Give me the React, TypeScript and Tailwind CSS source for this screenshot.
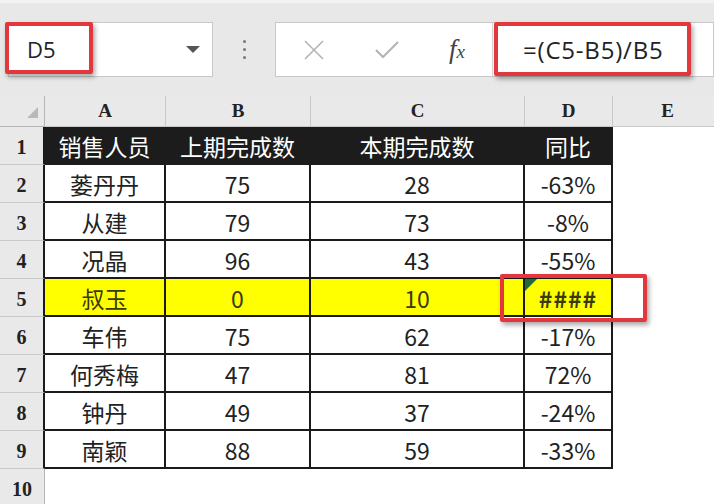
import React from "react";

const rows = [
  { name: "蒌丹丹", prev: "75", cur: "28", ratio: "-63%" },
  { name: "从建", prev: "79", cur: "73", ratio: "-8%" },
  { name: "况晶", prev: "96", cur: "43", ratio: "-55%" },
  { name: "叔玉", prev: "0", cur: "10", ratio: "####", hl: true },
  { name: "车伟", prev: "75", cur: "62", ratio: "-17%" },
  { name: "何秀梅", prev: "47", cur: "81", ratio: "72%" },
  { name: "钟丹", prev: "49", cur: "37", ratio: "-24%" },
  { name: "南颖", prev: "88", cur: "59", ratio: "-33%" },
];

const cjk = { fontFamily: '"Noto Sans CJK SC", "Noto Sans", sans-serif' };
const hdr = { fontFamily: '"Liberation Serif", "DejaVu Serif", serif' };
const ui = { fontFamily: '"Open Sans", "Noto Sans", sans-serif' };

function RowHead({ n, dark }: { n: number; dark: boolean }) {
  return (
    <div
      style={hdr}
      className={
        dark
          ? "flex items-end justify-center pb-[2px] bg-[#e9e9e9] border-b border-[#c9c9c9] border-r-2 border-r-[#1a1a1a] text-[20px] font-bold text-[#222]"
          : "flex items-end justify-center pb-[2px] bg-[#e9e9e9] border-b border-[#c9c9c9] border-r border-r-[#b5b5b5] text-[20px] font-bold text-[#222]"
      }
    >
      {n}
    </div>
  );
}

function Cell({ children, hl, last }: { children: React.ReactNode; hl?: boolean; last?: boolean }) {
  return (
    <div
      style={cjk}
      className={
        hl
          ? "relative flex items-center justify-center pt-[2px] bg-[#ffff00] border-b-2 border-r-2 border-[#1a1a1a] text-[23px] text-[#3a3a10]"
          : "relative flex items-center justify-center pt-[2px] bg-white border-b-2 border-r-2 border-[#1a1a1a] text-[23px] text-[#222]"
      }
    >
      {children}
      {last && (
        <span className="absolute left-0 top-0 w-0 h-0 border-t-[12px] border-t-[#1f6b3a] border-r-[12px] border-r-transparent" />
      )}
    </div>
  );
}

export default function App() {
  return (
    <div className="relative w-[714px] h-[504px] overflow-hidden bg-white">
      {/* formula bar */}
      <div className="h-[96px] bg-[#e8e8e8] border-t-[3px] border-[#f2f2f2] flex items-start pt-[19px] pl-[8px] gap-0">
        <div className="w-[205px] h-[55px] bg-white border border-[#c8c8c8] flex items-center justify-between pl-[18px] pr-[12px]">
          <span style={ui} className="text-[22px] text-[#222]">D5</span>
          <span className="w-0 h-0 border-l-[7px] border-r-[7px] border-t-[7px] border-l-transparent border-r-transparent border-t-[#555]" />
        </div>
        <div className="w-[62px] h-[55px] flex flex-col items-center justify-center gap-[5px]">
          <span className="w-[3px] h-[3px] rounded-full bg-[#777]" />
          <span className="w-[3px] h-[3px] rounded-full bg-[#777]" />
          <span className="w-[3px] h-[3px] rounded-full bg-[#777]" />
        </div>
        <div className="flex-1 h-[55px] bg-white border border-[#c8c8c8] flex items-center">
          <div className="w-[76px] flex justify-center">
            <svg width="22" height="22" viewBox="0 0 22 22" fill="none" stroke="#b3b3b3" strokeWidth="1.6">
              <path d="M2 2L20 20M20 2L2 20" />
            </svg>
          </div>
          <div className="w-[70px] flex justify-center">
            <svg width="26" height="20" viewBox="0 0 26 20" fill="none" stroke="#b3b3b3" strokeWidth="2">
              <path d="M2 10L9 17L24 2" />
            </svg>
          </div>
          <div className="w-[70px] flex justify-center">
            <span style={hdr} className="italic text-[27px] text-[#444] leading-none">
              f<span className="text-[19px]">x</span>
            </span>
          </div>
          <div className="h-full flex items-center pl-[30px] border-l border-[#dcdcdc]">
            <span style={ui} className="text-[24px] tracking-[0.8px] text-[#222]">=(C5-B5)/B5</span>
          </div>
        </div>
      </div>

      {/* sheet */}
      <div className="grid grid-cols-[45px_121px_145px_214px_88px_110px] grid-rows-[31px_repeat(10,38px)]">
        <div className="relative bg-[#e9e9e9] border-r border-b border-[#b5b5b5]">
          <span className="absolute right-[6px] bottom-[8px] w-0 h-0 border-l-[11px] border-l-transparent border-b-[11px] border-b-[#b9b9b9]" />
        </div>
        {["A", "B", "C", "D", "E"].map((c) => (
          <div
            key={c}
            style={hdr}
            className="flex items-center justify-center bg-[#e9e9e9] border-r border-b border-[#c9c9c9] text-[19px] font-bold text-[#222]"
          >
            {c}
          </div>
        ))}

        {/* row 1 */}
        <RowHead n={1} dark />
        {["销售人员", "上期完成数", "本期完成数", "同比"].map((t) => (
          <div
            key={t}
            style={cjk}
            className="flex items-center justify-center pt-[2px] bg-[#1c1c1c] border-b-2 border-r-2 border-[#1c1c1c] text-[23px] text-white"
          >
            {t}
          </div>
        ))}
        <div className="bg-white" />

        {rows.map((r, i) => (
          <React.Fragment key={i}>
            <RowHead n={i + 2} dark />
            <Cell hl={r.hl}>{r.name}</Cell>
            <Cell hl={r.hl}>{r.prev}</Cell>
            <Cell hl={r.hl}>{r.cur}</Cell>
            <Cell hl={r.hl} last={r.hl}>
              {r.hl ? <span className="font-bold tracking-[1px]">{r.ratio}</span> : r.ratio}
            </Cell>
            <div className="bg-white" />
          </React.Fragment>
        ))}

        <RowHead n={10} dark={false} />
        <div className="col-span-5 bg-white" />
      </div>

      {/* annotations */}
      <div className="absolute left-[5px] top-[22px] w-[88px] h-[52px] border-[4px] border-[#e2383d] rounded-[2px] shadow-[2px_3px_5px_rgba(0,0,0,0.35)]" />
      <div className="absolute left-[494px] top-[22px] w-[197px] h-[54px] border-[4px] border-[#e2383d] rounded-[2px] shadow-[2px_3px_5px_rgba(0,0,0,0.35)]" />
      <div className="absolute left-[500px] top-[274px] w-[147px] h-[48px] border-[4px] border-[#e2383d] rounded-[2px] shadow-[2px_3px_5px_rgba(0,0,0,0.35)]" />
    </div>
  );
}
